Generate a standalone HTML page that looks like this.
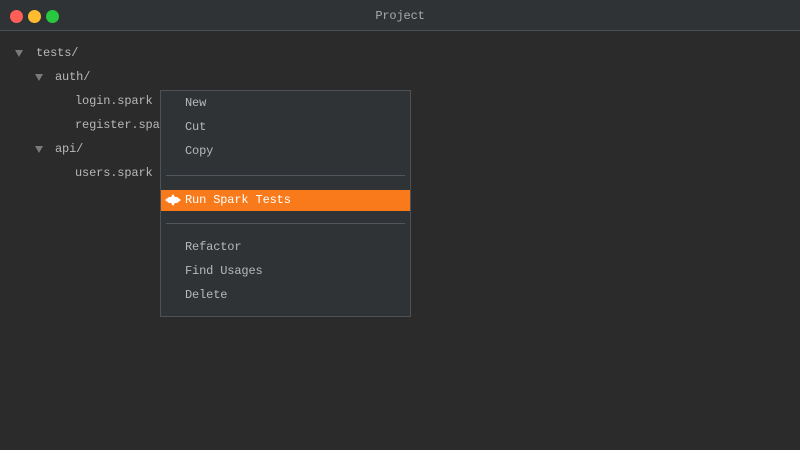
<!DOCTYPE html><html><head><style>
body{margin:0;width:800px;height:450px;background:#2b2b2b;font-family:"Liberation Mono",monospace;font-size:12px;letter-spacing:-0.15px;color:#b8b8b8;position:relative;overflow:hidden}
.t{position:absolute;white-space:pre;line-height:14px}
.bar{position:absolute;left:0;top:0;width:800px;height:30px;background:#303336;border-bottom:1px solid #4a4f54}
.dot{position:absolute;top:10px;width:13px;height:13px;border-radius:50%}
.menu{position:absolute;left:160px;top:90px;width:249px;height:225px;background:#303336;border:1px solid #4c5257}
.sep{position:absolute;left:5px;width:239px;height:1px;background:#50565b}
.hl{position:absolute;left:0;top:99px;width:249px;height:21px;background:#f97a1a}
.tri{position:absolute;width:0;height:0;border-left:4px solid transparent;border-right:4px solid transparent;border-top:7px solid #7a7a7a}
</style></head><body>
<div class="bar"><div class="dot" style="left:10px;background:#ff5f57"></div><div class="dot" style="left:28px;background:#febc2e"></div><div class="dot" style="left:46px;background:#28c840"></div>
<div class="t" style="left:0;width:800px;text-align:center;top:9px;color:#aaa">Project</div></div>
<div class="tri" style="left:15px;top:50px"></div><div class="t" style="left:36px;top:46px">tests/</div>
<div class="tri" style="left:35px;top:74px"></div><div class="t" style="left:55px;top:70px">auth/</div>
<div class="t" style="left:75px;top:94px">login.spark</div>
<div class="t" style="left:75px;top:118px">register.spark</div>
<div class="tri" style="left:35px;top:146px"></div><div class="t" style="left:55px;top:142px">api/</div>
<div class="t" style="left:75px;top:166px">users.spark</div>
<div class="menu">
<div class="t" style="left:24px;top:5px">New</div>
<div class="t" style="left:24px;top:29px">Cut</div>
<div class="t" style="left:24px;top:53px">Copy</div>
<div class="sep" style="top:84px"></div>
<div class="hl"><svg style="position:absolute;left:4px;top:3px" width="16" height="14" viewBox="0 0 16 14"><path d="M0 7L4 4H6L8 1L10 4H12L16 7L12 10H10L8 13L6 10H4Z" fill="#fff"/></svg><div class="t" style="left:24px;top:3px;color:#fff">Run Spark Tests</div></div>
<div class="sep" style="top:132px"></div>
<div class="t" style="left:24px;top:149px">Refactor</div>
<div class="t" style="left:24px;top:173px">Find Usages</div>
<div class="t" style="left:24px;top:197px">Delete</div>
</div>
</body></html>
